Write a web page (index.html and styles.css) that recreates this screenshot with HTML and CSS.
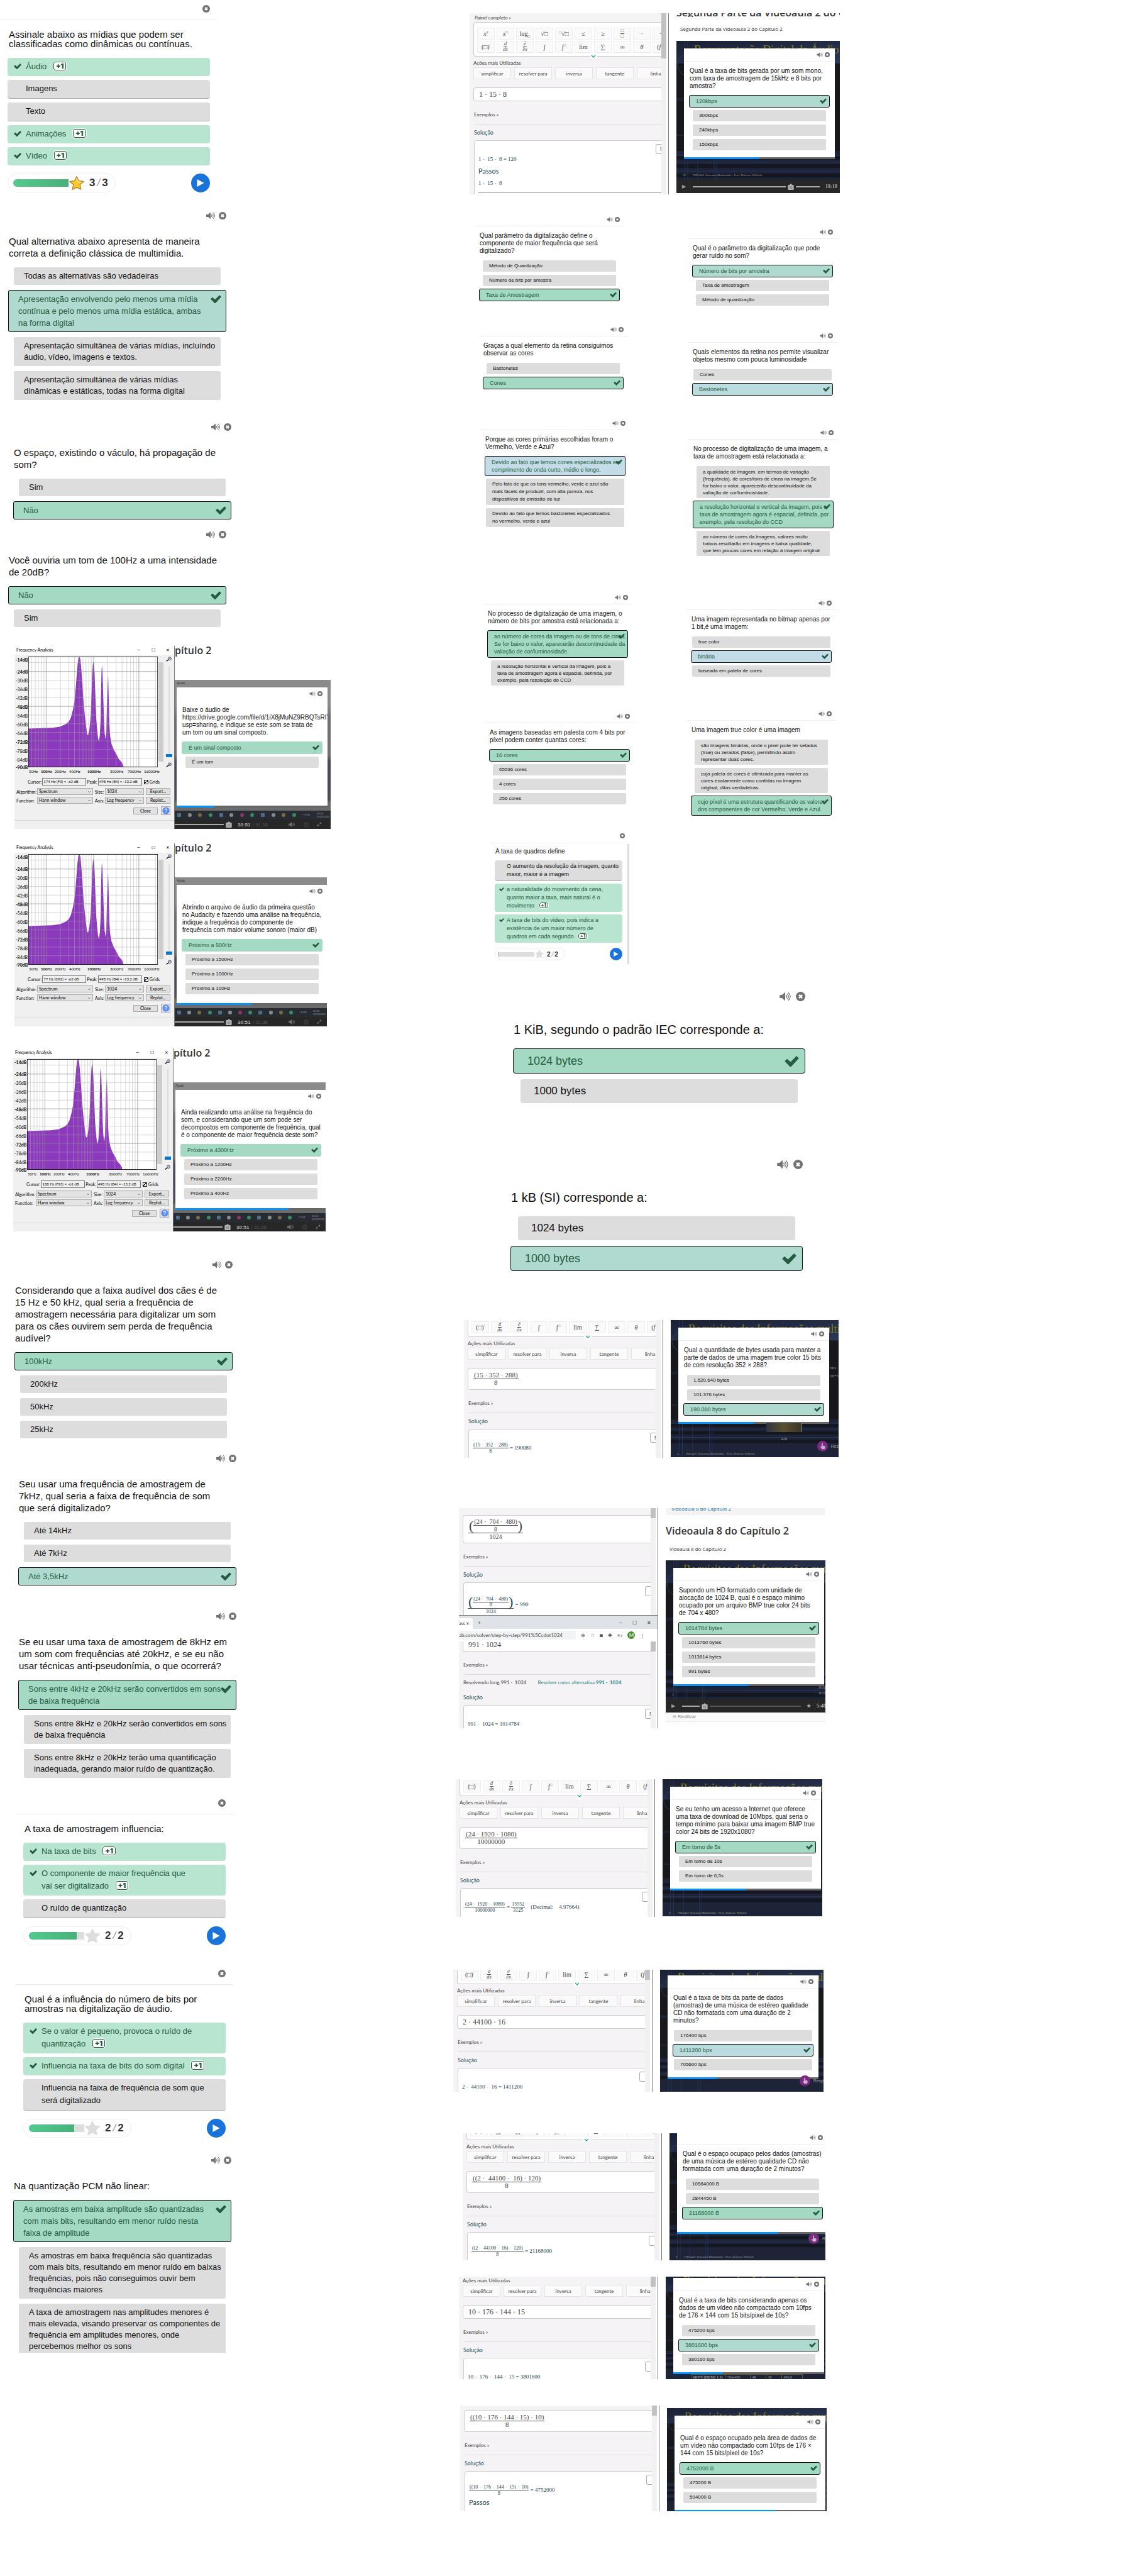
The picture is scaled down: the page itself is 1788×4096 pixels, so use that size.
FILE: index.html
```html
<!DOCTYPE html>
<html lang="pt-BR">
<head>
<meta charset="utf-8">
<title>Sistemas Multimídia - Capítulo 2</title>
<link rel="stylesheet" href="styles.css">
</head>
<body>
<svg class="defs" aria-hidden="true">
  <symbol id="close" viewBox="0 0 24 24"><circle cx="12" cy="12" r="12" fill="#727272"/><path d="M8 8l8 8M16 8l-8 8" stroke="#fff" stroke-width="4.4"/></symbol>
  <symbol id="sound" viewBox="0 0 28 24"><path d="M0 8h6l8-7v22l-8-7H0z" fill="#727272"/><path d="M16 8q4 4 0 8M19 5q7 7 0 14M22 2q10 10 0 20" fill="none" stroke="#727272" stroke-width="2"/></symbol>
  <symbol id="check" viewBox="0 0 24 18"><path d="M0 9l4-4 6 5L20 0l4 4-13 14h-2z" fill="#255c41"/></symbol>
  <symbol id="star-gold" viewBox="0 0 30 28"><path d="M15 1l4 9 10 1-7 7 2 9-9-4-9 4 2-9-7-7 10-1z" fill="#fff" stroke="#fff" stroke-width="5"/><path d="M15 2l4 8 9 1-7 6 2 9-8-4-8 4 2-9-7-6 9-1z" fill="#fdc92b" stroke="#b07a1c" stroke-width="1.4" stroke-linejoin="round"/><path d="M15 5l2 7 7 1" fill="none" stroke="#ffe98a" stroke-width="2"/></symbol>
  <symbol id="star-grey" viewBox="0 0 30 28"><path d="M15 1l4 9 10 1-7 7 2 9-9-4-9 4 2-9-7-7 10-1z" fill="#fff" stroke="#fff" stroke-width="5"/><path d="M15 2l4 8 9 1-7 6 2 9-8-4-8 4 2-9-7-6 9-1z" fill="#ddd" stroke="#ddd" stroke-width="2" stroke-linejoin="round"/></symbol>
  <symbol id="play" viewBox="0 0 30 30"><circle cx="15" cy="15" r="15" fill="#1a73d9"/><path d="M9.500 9v12l11-6z" fill="#fff"/></symbol>
  <symbol id="help" viewBox="0 0 14 14"><circle cx="7" cy="7" r="6.500" fill="#5b8def"/><path d="M5 5.500q0-2 2-2t2 1.700q0 1-1.200 1.700T7 8.300M7 9.400v1.200" fill="none" stroke="#fff" stroke-width="1.200"/></symbol>
  <symbol id="lens" viewBox="0 0 12 10"><circle cx="8" cy="4" r="3.200" fill="#dde" stroke="#222"/><path d="M5.500 6L1 9.500" stroke="#111" stroke-width="1.800"/><path d="M6.500 4h3" stroke="#12c"/></symbol>
  <symbol id="touch" viewBox="0 0 18 18"><circle cx="9" cy="9" r="9" fill="#7a2a80"/><path d="M7.500 4h1.800v4l4 1v3l-1.300 2H8L5 10l1-.600 1.500 1z" fill="#c9b3cc"/></symbol>
  <symbol id="chev" viewBox="0 0 12 12"><circle cx="6" cy="6" r="6" fill="#fff"/><path d="M3 5l3 3 3-3" fill="none" stroke="#17a89c" stroke-width="1.300"/></symbol>
  <symbol id="trash" viewBox="0 0 12 12"><path d="M1 3h10v8q0 1-1 1H2q-1 0-1-1zM4 3q0-2 2-2t2 2" fill="#b5b5b5" stroke="#b5b5b5"/><path d="M4 5v5M6 5v5M8 5v5" stroke="#777"/></symbol>
  <symbol id="spectrum" viewBox="0 0 594 407" preserveAspectRatio="none">
    <rect width="594" height="407" fill="#fff"/>
    <path d="M0 265L60 263 110 262 145 258 170 249 185 240 195 225 205 195 212 165 218 110 222 70 226 30 230 5 235 0 239 10 243 45 248 100 252 150 258 205 264 250 270 285 274 289 280 270 286 220 290 140 293 70 296 30 300 17 304 60 308 150 312 230 316 270 320 300 324 312 328 290 332 230 334 120 336 50 338 30 341 70 344 150 347 230 350 280 354 304 358 280 360 200 363 110 366 68 369 150 372 250 375 290 382 322 392 342 405 360 415 377 428 388 435 398 437 407 0 407z" fill="#8d39bd"/>
    <path d="M16 0v407M32 0v407M46 0v407M59 0v407M72 0v407M147 0v407M185 0v407M212 0v407M251 0v407M265 0v407M278 0v407M289 0v407M365 0v407M403 0v407M430 0v407M452 0v407M469 0v407M483 0v407M496 0v407M583 0v407M0 22h594M0 87h594M0 119h594M0 151h594M0 215h594M0 247h594M0 279h594M0 342h594M0 374h594" stroke="#aaa" stroke-width="1.500" opacity=".8"/>
    <path d="M82 0v407M234 0v407M300 0v407M507 0v407M0 55h594M0 183h594M0 310h594" stroke="#888" stroke-width="1.800"/>
    <rect x="1" y="1" width="592" height="405" fill="none" stroke="#000" stroke-width="2"/>
  </symbol>
  <symbol id="backdrop" viewBox="0 0 260 242" preserveAspectRatio="none">
    <rect width="260" height="242" fill="#17181c"/>
    <linearGradient id="navy" x1="0" x2="1" y1="0" y2="1"><stop offset="0" stop-color="#1a2033"/><stop offset="1" stop-color="#2b3857"/></linearGradient>
    <rect width="260" height="36" fill="url(#navy)"/>
    <rect y="175" width="260" height="67" fill="#1d2437"/>
    <path d="M0 186h260M0 199h260M0 214h260" stroke="#141620" stroke-width="6"/>
    <path d="M0 182h260M0 193h260M0 207h260" stroke="#26335a" stroke-width="1"/>
    <path d="M13 0v242M18 0v242M34 175v67M60 175v67M64 175v67M0 92h14M0 95h14M0 150h14" stroke="#26335a" stroke-width="1"/>
    <circle cx="20" cy="38" r="18" fill="none" stroke="#2c3a66"/>
  </symbol>
</svg>

<main class="board">
<div class="notes">

  <section class="quiz multi at-12">
    <header><button aria-label="Fechar"><svg class="ico"><use href="#close"/></svg></button></header>
    <h2>Assinale abaixo as mídias que podem ser<br>classificadas como dinâmicas ou contínuas.</h2>
    <div class="opts">
      <button class="opt hit"><svg class="tick"><use href="#check"/></svg>Áudio <b class="plus">+1</b></button>
      <button class="opt">Imagens</button>
      <button class="opt">Texto</button>
      <button class="opt hit"><svg class="tick"><use href="#check"/></svg>Animações <b class="plus">+1</b></button>
      <button class="opt hit"><svg class="tick"><use href="#check"/></svg>Vídeo <b class="plus">+1</b></button>
    </div>
    <footer><div class="score"><span class="track"><span style="width:100%"></span></span><svg class="star"><use href="#star-gold"/></svg><b>3<i>/</i>3</b></div><button aria-label="Continuar"><svg class="play"><use href="#play"/></svg></button></footer>
  </section>

  <section class="quiz at-13">
    <header><button aria-label="Ouvir"><svg class="snd"><use href="#sound"/></svg></button><button aria-label="Fechar"><svg class="ico"><use href="#close"/></svg></button></header>
    <h2>Qual alternativa abaixo apresenta de maneira<br>correta a definição clássica de multimídia.</h2>
    <div class="opts">
      <button class="opt">Todas as alternativas são vedadeiras</button>
      <button class="opt hit mist">Apresentação envolvendo pelo menos uma mídia<br>contínua e pelo menos uma mídia estática, ambas<br>na forma digital<svg class="tick"><use href="#check"/></svg></button>
      <button class="opt">Apresentação simultânea de várias mídias, incluíndo<br>áudio, vídeo, imagens e textos.</button>
      <button class="opt">Apresentação simultánea de várias mídias<br>dinâmicas e estáticas, todas na forma digital</button>
    </div>
  </section>

  <section class="quiz at-20">
    <header><button aria-label="Ouvir"><svg class="snd"><use href="#sound"/></svg></button><button aria-label="Fechar"><svg class="ico"><use href="#close"/></svg></button></header>
    <h2>O espaço, existindo o váculo, há propagação de<br>som?</h2>
    <div class="opts">
      <button class="opt">Sim</button>
      <button class="opt hit">Não<svg class="tick"><use href="#check"/></svg></button>
    </div>
  </section>

  <section class="quiz at-13">
    <header><button aria-label="Ouvir"><svg class="snd"><use href="#sound"/></svg></button><button aria-label="Fechar"><svg class="ico"><use href="#close"/></svg></button></header>
    <h2>Você ouviria um tom de 100Hz a uma intensidade<br>de 20dB?</h2>
    <div class="opts">
      <button class="opt hit">Não<svg class="tick"><use href="#check"/></svg></button>
      <button class="opt">Sim</button>
    </div>
  </section>

  <section class="lesson at-23">
    <div class="audacity">
      <div class="titlebar"><span>Frequency Analysis</span><span class="wbtn">—</span><span class="wbtn">☐</span><span class="wbtn">✕</span></div>
      <div class="plotrow">
        <ul class="db"><li><b>-14dB</b></li><li><b>-24dB</b></li><li>-30dB</li><li>-36dB</li><li>-42dB</li><li><b>-48dB</b></li><li>-54dB</li><li>-60dB</li><li>-66dB</li><li><b>-72dB</b></li><li>-78dB</li><li>-84dB</li><li><b>-90dB</b></li></ul>
        <svg class="plot"><use href="#spectrum"/></svg>
        <div class="vscroll"></div>
        <div class="zoomer"><svg><use href="#lens"/></svg><span></span><svg><use href="#lens"/></svg></div>
      </div>
      <div class="hz"><span>50Hz</span><b>100Hz</b><span>200Hz</span><span>400Hz</span><b>1000Hz</b><span>3000Hz</span><span>7000Hz</span><span>16000Hz</span></div>
      <div class="readout"><label for="c1">Cursor:</label><input id="c1" value="174 Hz (F3) = -62 dB"><label for="p1">Peak:</label><input id="p1" value="498 Hz (B4) = -13.2 dB"><input type="checkbox" id="g1" checked><label for="g1">Grids</label></div>
      <div class="settings">
        <label for="a1">Algorithm:</label><select id="a1"><option>Spectrum</option></select><label for="s1">Size:</label><select id="s1"><option>1024</option></select><button>Export...</button>
        <label for="f1">Function:</label><select id="f1"><option>Hann window</option></select><label for="x1">Axis:</label><select id="x1"><option>Log frequency</option></select><button>Replot...</button>
      </div>
      <div class="closing"><button>Close</button><button class="help" aria-label="Help"><svg><use href="#help"/></svg></button></div>
    </div>
    <div class="screen w-248">
      <h1>pítulo 2</h1>
      <div class="desktop">
        <small>Ajuda</small>
        <div class="modal tall">
          <section class="quiz small flat">
            <header><button aria-label="Ouvir"><svg class="snd"><use href="#sound"/></svg></button><button aria-label="Fechar"><svg class="ico"><use href="#close"/></svg></button></header>
            <h2>Baixe o áudio de<br>https://drive.google.com/file/d/1iX8jMuNZ9RBQTsRIYjy<br>usp=sharing, e indique se este som se trata de<br>um tom ou um sinal composto.</h2>
            <div class="opts"><button class="opt hit">É um sinal composto<svg class="tick"><use href="#check"/></svg></button><button class="opt">É um tom</button></div>
          </section>
          <div class="bar"><span style="width:25%"></span></div>
        </div>
        <div class="taskbar"><i></i><i></i><i></i><i></i><i></i><i></i><i></i><i></i><i></i><i></i><i></i><i></i><span>^ POR</span><span>09:04<br>01/09/2020</span></div>
        <div class="controls"><span class="seek"></span><svg><use href="#trash"/></svg><b>30:51</b><span class="dim">/ 31:36</span><svg class="late"><use href="#sound"/></svg><span class="gear">⚙</span><span>⤢</span></div>
      </div>
    </div>
  </section>

  <section class="lesson at-23">
    <div class="audacity">
      <div class="titlebar"><span>Frequency Analysis</span><span class="wbtn">—</span><span class="wbtn">☐</span><span class="wbtn">✕</span></div>
      <div class="plotrow">
        <ul class="db"><li><b>-14dB</b></li><li><b>-24dB</b></li><li>-30dB</li><li>-36dB</li><li>-42dB</li><li><b>-48dB</b></li><li>-54dB</li><li>-60dB</li><li>-66dB</li><li><b>-72dB</b></li><li>-78dB</li><li>-84dB</li><li><b>-90dB</b></li></ul>
        <svg class="plot"><use href="#spectrum"/></svg>
        <div class="vscroll"></div>
        <div class="zoomer"><svg><use href="#lens"/></svg><span></span><svg><use href="#lens"/></svg></div>
      </div>
      <div class="hz"><span>50Hz</span><b>100Hz</b><span>200Hz</span><span>400Hz</span><b>1000Hz</b><span>3000Hz</span><span>7000Hz</span><span>16000Hz</span></div>
      <div class="readout"><label for="c2">Cursor:</label><input id="c2" value="77 Hz (D♯2) = -62 dB"><label for="p2">Peak:</label><input id="p2" value="498 Hz (B4) = -13.2 dB"><input type="checkbox" id="g2" checked><label for="g2">Grids</label></div>
      <div class="settings">
        <label for="a2">Algorithm:</label><select id="a2"><option>Spectrum</option></select><label for="s2">Size:</label><select id="s2"><option>1024</option></select><button>Export...</button>
        <label for="f2">Function:</label><select id="f2"><option>Hann window</option></select><label for="x2">Axis:</label><select id="x2"><option>Log frequency</option></select><button>Replot...</button>
      </div>
      <div class="closing"><button>Close</button><button class="help" aria-label="Help"><svg><use href="#help"/></svg></button></div>
    </div>
    <div class="screen w-242">
      <h1>pítulo 2</h1>
      <div class="desktop">
        <small>Ajuda</small>
        <div class="modal tall">
          <section class="quiz small flat">
            <header><button aria-label="Ouvir"><svg class="snd"><use href="#sound"/></svg></button><button aria-label="Fechar"><svg class="ico"><use href="#close"/></svg></button></header>
            <h2>Abrindo o arquivo de áudio da primeira questão<br>no Audacity e fazendo uma análise na frequência,<br>indique a frequência do componente de<br>frequência com maior volume sonoro (maior dB)</h2>
            <div class="opts"><button class="opt hit">Próximo a 500Hz<svg class="tick"><use href="#check"/></svg></button><button class="opt">Próximo a 1500Hz</button><button class="opt">Próximo a 1000Hz</button><button class="opt">Próximo a 100Hz</button></div>
          </section>
          <div class="bar"><span style="width:50%"></span></div>
        </div>
        <div class="taskbar"><i></i><i></i><i></i><i></i><i></i><i></i><i></i><i></i><i></i><i></i><i></i><i></i><span>^ POR</span><span>09:04<br>01/09/2020</span></div>
        <div class="controls"><span class="seek"></span><svg><use href="#trash"/></svg><b>30:51</b><span class="dim">/ 31:36</span><svg class="late"><use href="#sound"/></svg><span class="gear">⚙</span><span>⤢</span></div>
      </div>
    </div>
  </section>

  <section class="lesson at-20">
    <div class="audacity">
      <div class="titlebar"><span>Frequency Analysis</span><span class="wbtn">—</span><span class="wbtn">☐</span><span class="wbtn">✕</span></div>
      <div class="plotrow">
        <ul class="db"><li><b>-14dB</b></li><li><b>-24dB</b></li><li>-30dB</li><li>-36dB</li><li>-42dB</li><li><b>-48dB</b></li><li>-54dB</li><li>-60dB</li><li>-66dB</li><li><b>-72dB</b></li><li>-78dB</li><li>-84dB</li><li><b>-90dB</b></li></ul>
        <svg class="plot"><use href="#spectrum"/></svg>
        <div class="vscroll"></div>
        <div class="zoomer"><svg><use href="#lens"/></svg><span></span><svg><use href="#lens"/></svg></div>
      </div>
      <div class="hz"><span>50Hz</span><b>100Hz</b><span>200Hz</span><span>400Hz</span><b>1000Hz</b><span>3000Hz</span><span>7000Hz</span><span>16000Hz</span></div>
      <div class="readout"><label for="c3">Cursor:</label><input id="c3" value="188 Hz (F♯3) = -61 dB"><label for="p3">Peak:</label><input id="p3" value="498 Hz (B4) = -13.2 dB"><input type="checkbox" id="g3" checked><label for="g3">Grids</label></div>
      <div class="settings">
        <label for="a3">Algorithm:</label><select id="a3"><option>Spectrum</option></select><label for="s3">Size:</label><select id="s3"><option>1024</option></select><button>Export...</button>
        <label for="f3">Function:</label><select id="f3"><option>Hann window</option></select><label for="x3">Axis:</label><select id="x3"><option>Log frequency</option></select><button>Replot...</button>
      </div>
      <div class="closing"><button>Close</button><button class="help" aria-label="Help"><svg><use href="#help"/></svg></button></div>
    </div>
    <div class="screen w-242">
      <h1>pítulo 2</h1>
      <div class="desktop">
        <small>Ajuda</small>
        <div class="modal tall">
          <section class="quiz small flat">
            <header><button aria-label="Ouvir"><svg class="snd"><use href="#sound"/></svg></button><button aria-label="Fechar"><svg class="ico"><use href="#close"/></svg></button></header>
            <h2>Ainda realizando uma análise na frequência do<br>som, e considerando que um som pode ser<br>decompostos em componente de frequência, qual<br>é o componente de maior frequência deste som?</h2>
            <div class="opts"><button class="opt hit">Próximo a 4300Hz<svg class="tick"><use href="#check"/></svg></button><button class="opt">Próximo a 1200Hz</button><button class="opt">Próximo a 2200Hz</button><button class="opt">Próximo a 400Hz</button></div>
          </section>
          <div class="bar"><span style="width:75%"></span></div>
        </div>
        <div class="taskbar"><i></i><i></i><i></i><i></i><i></i><i></i><i></i><i></i><i></i><i></i><i></i><i></i><span>^ POR</span><span>09:04<br>01/09/2020</span></div>
        <div class="controls"><span class="seek"></span><svg><use href="#trash"/></svg><b>30:51</b><span class="dim">/ 31:36</span><svg class="late"><use href="#sound"/></svg><span class="gear">⚙</span><span>⤢</span></div>
      </div>
    </div>
  </section>

  <section class="quiz at-23">
    <header><button aria-label="Ouvir"><svg class="snd"><use href="#sound"/></svg></button><button aria-label="Fechar"><svg class="ico"><use href="#close"/></svg></button></header>
    <h2>Considerando que a faixa audível dos cães é de<br>15 Hz e 50 kHz, qual seria a frequência de<br>amostragem necessária para digitalizar um som<br>para os cães ouvirem sem perda de frequência<br>audível?</h2>
    <div class="opts">
      <button class="opt hit">100kHz<svg class="tick"><use href="#check"/></svg></button>
      <button class="opt">200kHz</button>
      <button class="opt">50kHz</button>
      <button class="opt">25kHz</button>
    </div>
  </section>

  <section class="quiz at-29">
    <header><button aria-label="Ouvir"><svg class="snd"><use href="#sound"/></svg></button><button aria-label="Fechar"><svg class="ico"><use href="#close"/></svg></button></header>
    <h2>Seu usar uma frequência de amostragem de<br>7kHz, qual seria a faixa de frequência de som<br>que será digitalizado?</h2>
    <div class="opts">
      <button class="opt">Até 14kHz</button>
      <button class="opt">Até 7kHz</button>
      <button class="opt hit mist">Até 3,5kHz<svg class="tick"><use href="#check"/></svg></button>
    </div>
  </section>

  <section class="quiz at-29">
    <header><button aria-label="Ouvir"><svg class="snd"><use href="#sound"/></svg></button><button aria-label="Fechar"><svg class="ico"><use href="#close"/></svg></button></header>
    <h2>Se eu usar uma taxa de amostragem de 8kHz em<br>um som com frequências até 20kHz, e se eu não<br>usar técnicas anti-pseudonímia, o que ocorrerá?</h2>
    <div class="opts">
      <button class="opt hit">Sons entre 4kHz e 20kHz serão convertidos em sons<br>de baixa frequência<svg class="tick"><use href="#check"/></svg></button>
      <button class="opt">Sons entre 8kHz e 20kHz serão convertidos em sons<br>de baixa frequência</button>
      <button class="opt">Sons entre 8kHz e 20kHz terão uma quantificação<br>inadequada, gerando maior ruído de quantização.</button>
    </div>
  </section>

  <section class="quiz multi at-37">
    <header><button aria-label="Fechar"><svg class="ico"><use href="#close"/></svg></button></header>
    <h2>A taxa de amostragem influencia:</h2>
    <div class="opts">
      <button class="opt hit"><svg class="tick"><use href="#check"/></svg>Na taxa de bits <b class="plus">+1</b></button>
      <button class="opt hit"><svg class="tick"><use href="#check"/></svg>O componente de maior frequência que<br>vai ser digitalizado <b class="plus">+1</b></button>
      <button class="opt">O ruído de quantização</button>
    </div>
    <footer><div class="score"><span class="track"><span style="width:86%"></span></span><svg class="star"><use href="#star-grey"/></svg><b>2<i>/</i>2</b></div><button aria-label="Continuar"><svg class="play"><use href="#play"/></svg></button></footer>
  </section>

  <section class="quiz multi at-37">
    <header><button aria-label="Fechar"><svg class="ico"><use href="#close"/></svg></button></header>
    <h2>Qual é a influência do número de bits por<br>amostras na digitalização de áudio.</h2>
    <div class="opts">
      <button class="opt hit"><svg class="tick"><use href="#check"/></svg>Se o valor é pequeno, provoca o ruído de<br>quantização <b class="plus">+1</b></button>
      <button class="opt hit"><svg class="tick"><use href="#check"/></svg>Influencia na taxa de bits do som digital <b class="plus">+1</b></button>
      <button class="opt">Influencia na faixa de frequência de som que<br>será digitalizado</button>
    </div>
    <footer><div class="score"><span class="track"><span style="width:82%"></span></span><svg class="star"><use href="#star-grey"/></svg><b>2<i>/</i>2</b></div><button aria-label="Continuar"><svg class="play"><use href="#play"/></svg></button></footer>
  </section>

  <section class="quiz at-20">
    <header><button aria-label="Ouvir"><svg class="snd"><use href="#sound"/></svg></button><button aria-label="Fechar"><svg class="ico"><use href="#close"/></svg></button></header>
    <h2>Na quantização PCM não linear:</h2>
    <div class="opts">
      <button class="opt hit">As amostras em baixa amplitude são quantizadas<br>com mais bits, resultando em menor ruído nesta<br>faixa de amplitude<svg class="tick"><use href="#check"/></svg></button>
      <button class="opt">As amostras em baixa frequência são quantizadas<br>com mais bits, resultando em menor ruído em baixas<br>frequências, pois não conseguimos ouvir bem<br>frequências maiores</button>
      <button class="opt cropped">A taxa de amostragem nas amplitudes menores é<br>mais elevada, visando preservar os componentes de<br>frequência em amplitudes menores, onde<br>percebemos melhor os sons</button>
    </div>
  </section>
</div>

<div class="clips">

  <section class="pair in-27">
    <div class="panel h-288">
      <div class="sheet">
        <p class="full">Painel completo »</p>
        <div class="keypad whole">
          <div class="keys"><button><i>x</i><sup>2</sup></button><button><i>x</i><sup>□</sup></button><button class="word">log<sub>□</sub></button><button>√□</button><button><sup>□</sup>√□</button><button>≤</button><button>≥</button><button><span class="frac"><span>□</span><span>□</span></span></button><button>·</button><button>÷</button></div>
          <div class="keys"><button>(□)<sup>′</sup></button><button><span class="frac"><i>d</i><i>dx</i></span></button><button><span class="frac"><i>∂</i><i>∂x</i></span></button><button>∫</button><button>∫<sup>□</sup></button><button>lim</button><button>∑</button><button>∞</button><button><i>θ</i></button><button>(<i>f</i> ∘</button></div>
          <svg class="chev"><use href="#chev"/></svg>
        </div>
        <p class="acts-title">Ações mais Utilizadas</p>
        <div class="acts"><button>simplificar</button><button>resolver para</button><button>inversa</button><button>tangente</button><button>linha</button></div>
        <div class="entry">1 · 15 · 8</div>
        <p class="examples">Exemplos »</p>
        <p class="solution">Solução</p>
        <div class="result"><button class="more">M</button><p>1 · &nbsp;15 · &nbsp;8 = 120</p><h3>Passos</h3><p>1 · &nbsp;15 · &nbsp;8</p><hr></div>
      </div>
      <div class="gutter thumb-long"></div>
    </div>
    <div class="screen w-260">
      <h1 class="halved">Segunda Parte da Videoaula 2 do Capítulo 2</h1>
      <p class="lead">Segunda Parte da Videoaula 2 do Capítulo 2</p>
      <div class="slide">
        <svg class="back"><use href="#backdrop"/></svg>
        <p class="slide-title">Representação Digital de Áudio</p>
        <div class="modal">
          <section class="quiz small">
            <header><button aria-label="Ouvir"><svg class="snd"><use href="#sound"/></svg></button><button aria-label="Fechar"><svg class="ico"><use href="#close"/></svg></button></header>
            <h2>Qual é a taxa de bits gerada por um som mono,<br>com taxa de amostragem de 15kHz e 8 bits por<br>amostra?</h2>
            <div class="opts"><button class="opt hit mist">120kbps<svg class="tick"><use href="#check"/></svg></button><button class="opt">300kbps</button><button class="opt">240kbps</button><button class="opt">150kbps</button></div>
          </section>
          <div class="bar"><span style="width:50%"></span></div>
        </div>
        <p class="slide-foot"><span>23</span> INE5431 Sistemas Multimídia - Prof. Roberto Willrich</p>
        <div class="controls deck"><span>▶</span><span class="seek"></span><svg><use href="#trash"/></svg><span class="seek"></span><b>19:18</b></div>
      </div>
    </div>
  </section>

  <div class="duo duo-params">
    <section class="quiz small">
      <header><button aria-label="Ouvir"><svg class="snd"><use href="#sound"/></svg></button><button aria-label="Fechar"><svg class="ico"><use href="#close"/></svg></button></header>
      <h2>Qual parâmetro da digitalização define o<br>componente de maior frequência que será<br>digitalizado?</h2>
      <div class="opts"><button class="opt">Método de Quantização</button><button class="opt">Número de bits por amostra</button><button class="opt hit">Taxa de Amostragem<svg class="tick"><use href="#check"/></svg></button></div>
    </section>
    <section class="quiz small">
      <header><button aria-label="Ouvir"><svg class="snd"><use href="#sound"/></svg></button><button aria-label="Fechar"><svg class="ico"><use href="#close"/></svg></button></header>
      <h2>Qual é o parâmetro da digitalização que pode<br>gerar ruído no som?</h2>
      <div class="opts"><button class="opt hit mist">Número de bits por amostra<svg class="tick"><use href="#check"/></svg></button><button class="opt">Taxa de amostragem</button><button class="opt">Método de quantização</button></div>
    </section>
  </div>

  <div class="duo duo-retina">
    <section class="quiz small">
      <header><button aria-label="Ouvir"><svg class="snd"><use href="#sound"/></svg></button><button aria-label="Fechar"><svg class="ico"><use href="#close"/></svg></button></header>
      <h2>Graças a qual elemento da retina consiguimos<br>observar as cores</h2>
      <div class="opts"><button class="opt">Bastonetes</button><button class="opt hit">Cones<svg class="tick"><use href="#check"/></svg></button></div>
    </section>
    <section class="quiz small">
      <header><button aria-label="Ouvir"><svg class="snd"><use href="#sound"/></svg></button><button aria-label="Fechar"><svg class="ico"><use href="#close"/></svg></button></header>
      <h2>Quais elementos da retina nos permite visualizar<br>objetos mesmo com pouca luminosidade</h2>
      <div class="opts wide"><button class="opt">Cones</button><button class="opt hit sky">Bastonetes<svg class="tick"><use href="#check"/></svg></button></div>
    </section>
  </div>

  <div class="duo duo-colors">
    <section class="quiz small">
      <header><button aria-label="Ouvir"><svg class="snd"><use href="#sound"/></svg></button><button aria-label="Fechar"><svg class="ico"><use href="#close"/></svg></button></header>
      <h2>Porque as cores primárias escolhidas foram o<br>Vermelho, Verde e Azui?</h2>
      <div class="opts wide"><button class="opt hit blue">Devido ao fato que temos cones especializados em<br>comprimento de onda curto, médio e longo.<svg class="tick"><use href="#check"/></svg></button><button class="opt">Pelo fato de que os tons vermelho, verde e azul são<br>mais fáceis de produzir, com alta pureza, nos<br>dispositivos de emissão de luz</button><button class="opt">Devido ao fato que temos bastonetes especializados<br>no vermelho, verde e azul</button></div>
    </section>
    <section class="quiz small">
      <header><button aria-label="Ouvir"><svg class="snd"><use href="#sound"/></svg></button><button aria-label="Fechar"><svg class="ico"><use href="#close"/></svg></button></header>
      <h2>No processo de digitalização de uma imagem, a<br>taxa de amostragem está relacionada a:</h2>
      <div class="opts tight"><button class="opt">a qualidade de imagem, em termos de variação<br>(frequência), de cores/tons de cinza na imagem.Se<br>for baixo o valor, aparecerão descontinuidade da<br>valiação de cor/luminosidade.</button><button class="opt hit">a resolução horizontal e vertical da imagem, pois a<br>taxa de amostragem agora é espacial, definida, por<br>exemplo, pela resolução do CCD<svg class="tick"><use href="#check"/></svg></button><button class="opt">ao número de cores da imagens, valores muito<br>baixos resultarão em imagens e baixa qualidade,<br>que tem poucas cores em relação à imagem original</button></div>
    </section>
  </div>

  <div class="duo duo-bits">
    <section class="quiz small">
      <header><button aria-label="Ouvir"><svg class="snd"><use href="#sound"/></svg></button><button aria-label="Fechar"><svg class="ico"><use href="#close"/></svg></button></header>
      <h2>No processo de digitalização de uma imagem, o<br>número de bits por amostra está relacionada a:</h2>
      <div class="opts tight"><button class="opt hit">ao número de cores da imagem ou de tons de cinza.<br>Se for baixo o valor, aparecerão descontinuidade da<br>valiação de cor/luminosidade.<svg class="tick"><use href="#check"/></svg></button><button class="opt">a resolução horizontal e vertical da imagem, pois a<br>taxa de amostragem agora é espacial, definida, por<br>exemplo, pela resolução do CCD</button></div>
    </section>
    <section class="quiz small">
      <header><button aria-label="Ouvir"><svg class="snd"><use href="#sound"/></svg></button><button aria-label="Fechar"><svg class="ico"><use href="#close"/></svg></button></header>
      <h2>Uma imagem representada no bitmap apenas por<br>1 bit,é uma imagem:</h2>
      <div class="opts wide"><button class="opt">true color</button><button class="opt hit blue">binária<svg class="tick"><use href="#check"/></svg></button><button class="opt">baseada em paleta de cores</button></div>
    </section>
  </div>

  <div class="duo duo-palette">
    <section class="quiz small">
      <header><button aria-label="Ouvir"><svg class="snd"><use href="#sound"/></svg></button><button aria-label="Fechar"><svg class="ico"><use href="#close"/></svg></button></header>
      <h2>As imagens baseadas em palesta com 4 bits por<br>píxel podem conter quantas cores:</h2>
      <div class="opts"><button class="opt hit">16 cores<svg class="tick"><use href="#check"/></svg></button><button class="opt">65536 cores</button><button class="opt">4 cores</button><button class="opt">256 cores</button></div>
    </section>
    <section class="quiz small">
      <header><button aria-label="Ouvir"><svg class="snd"><use href="#sound"/></svg></button><button aria-label="Fechar"><svg class="ico"><use href="#close"/></svg></button></header>
      <h2>Uma imagem true color é uma imagem</h2>
      <div class="opts tight"><button class="opt">são imagens binárias, onde o pixel pode ter setados<br>(true) ou zerados (false), permitindo assim<br>representar duas cores.</button><button class="opt">cuja paleta de cores é otimizada para manter as<br>cores exatamente como contidas na imagem<br>original, ditas verdadeiras.</button><button class="opt hit">cujo píxel é uma estrutura quantificando os valores<br>dos componentes de cor Vermelho, Verde e Azul.<svg class="tick"><use href="#check"/></svg></button></div>
    </section>
  </div>

  <div class="framed">
    <section class="quiz multi mini">
      <header><button aria-label="Fechar"><svg class="ico"><use href="#close"/></svg></button></header>
      <h2>A taxa de quadros define</h2>
      <div class="opts">
        <button class="opt">O aumento da resolução da imagem, quanto<br>maior, maior é a imagem</button>
        <button class="opt hit"><svg class="tick"><use href="#check"/></svg>a naturalidade do movimento da cena,<br>quanto maior a taxa, mais natural é o<br>movimento <b class="plus">+1</b></button>
        <button class="opt hit"><svg class="tick"><use href="#check"/></svg>A taxa de bits do vídeo, pois indica a<br>existência de um maior número de<br>quadros em cada segundo <b class="plus">+1</b></button>
      </div>
      <footer><div class="score"><span class="track"><span style="width:2%"></span></span><svg class="star"><use href="#star-grey"/></svg><b>2<i>/</i>2</b></div><button aria-label="Continuar"><svg class="play"><use href="#play"/></svg></button></footer>
    </section>
  </div>

  <section class="quiz large in-96">
    <header><button aria-label="Ouvir"><svg class="snd"><use href="#sound"/></svg></button><button aria-label="Fechar"><svg class="ico"><use href="#close"/></svg></button></header>
    <h2>1 KiB, segundo o padrão IEC corresponde a:</h2>
    <div class="opts"><button class="opt hit">1024 bytes<svg class="tick"><use href="#check"/></svg></button><button class="opt">1000 bytes</button></div>
  </section>

  <section class="quiz large in-92">
    <header><button aria-label="Ouvir"><svg class="snd"><use href="#sound"/></svg></button><button aria-label="Fechar"><svg class="ico"><use href="#close"/></svg></button></header>
    <h2>1 kB (SI) corresponde a:</h2>
    <div class="opts"><button class="opt">1024 bytes</button><button class="opt hit mist">1000 bytes<svg class="tick"><use href="#check"/></svg></button></div>
  </section>

  <section class="pair in-18">
    <div class="panel h-219">
      <div class="sheet">
        <div class="keypad">
          <div class="keys"><button>(□)<sup>′</sup></button><button><span class="frac"><i>d</i><i>dx</i></span></button><button><span class="frac"><i>∂</i><i>∂x</i></span></button><button>∫</button><button>∫<sup>□</sup></button><button>lim</button><button>∑</button><button>∞</button><button><i>θ</i></button><button>(<i>f</i> ∘</button></div>
          <svg class="chev"><use href="#chev"/></svg>
        </div>
        <p class="acts-title">Ações mais Utilizadas</p>
        <div class="acts"><button>simplificar</button><button>resolver para</button><button>inversa</button><button>tangente</button><button>linha</button></div>
        <div class="entry two"><span class="frac"><span>(15 · 352 · 288)</span><span>8</span></span></div>
        <p class="examples">Exemplos »</p>
        <p class="solution">Solução</p>
        <div class="result"><button class="more">M</button><p><span class="frac"><span>(15 · &nbsp;352 · &nbsp;288)</span><span>8</span></span> = 190080</p></div>
      </div>
      <div class="gutter"></div>
    </div>
    <div class="screen w-267">
      <div class="slide h-218">
        <svg class="back"><use href="#backdrop"/></svg>
        <p class="slide-title">Requisitos das Informações multimídia</p>
        <div class="modal">
          <section class="quiz small">
            <header><button aria-label="Ouvir"><svg class="snd"><use href="#sound"/></svg></button><button aria-label="Fechar"><svg class="ico"><use href="#close"/></svg></button></header>
            <h2>Qual a quantidade de bytes usada para manter a<br>parte de dados de uma imagem true color 15 bits<br>de com resolução 352 × 288?</h2>
            <div class="opts"><button class="opt">1.520.640 bytes</button><button class="opt">101.376 bytes</button><button class="opt hit mist">190.080 bytes<svg class="tick"><use href="#check"/></svg></button></div>
          </section>
          <div class="bar"><span style="width:50%"></span></div>
        </div>
        <div class="figure"><span></span>420</div>
        <p class="side">bits<br>20*5</p>
        <p class="answer"><svg><use href="#touch"/></svg>Res</p>
        <p class="slide-foot"><span>4</span> INE5431 Sistemas Multimídia - Prof. Roberto Willrich</p>
      </div>
    </div>
  </section>

  <section class="pair in-10">
    <div class="panel stack h-350">
      <div class="split upper">
        <div class="sheet">
          <div class="entry three"><span class="frac"><span class="paren"><span class="frac"><span>(24 · &nbsp;704 · &nbsp;480)</span><span>8</span></span></span><span>1024</span></span></div>
          <p class="examples">Exemplos »</p>
          <p class="solution">Solução</p>
          <div class="result"><button class="more"></button><p><span class="frac"><span class="paren"><span class="frac"><span>(24 · &nbsp;704 · &nbsp;480)</span><span>8</span></span></span><span>1024</span></span> = 990</p></div>
        </div>
        <div class="gutter thumb"></div>
      </div>
      <div class="tabs"><span class="tab">ass ✕</span><span>+</span><span class="win">—</span><span>☐</span><span>✕</span></div>
      <div class="address"><input aria-label="Endereço" value="ab.com/solver/step-by-step/991%5Ccdot1024"><span>⊕</span><span>☆</span><span>◙</span><span>✚</span><span>≡♪</span><b>M</b><span>⋮</span></div>
      <div class="split">
        <div class="sheet">
          <div class="entry lower">991 · 1024</div>
          <p class="examples">Exemplos »</p>
          <p class="methods"><span>Resolvendo long 991 · &nbsp;1024</span><a href="#alt">Resolver como alternativa <b>991 · &nbsp;1024</b></a></p>
          <p class="solution">Solução</p>
          <div class="result"><button class="more">M</button><p>991 · &nbsp;1024 = 1014784</p></div>
        </div>
        <div class="gutter thumb"></div>
      </div>
    </div>
    <div class="screen w-254">
      <p class="crumb"><a href="#aula8">Videoaula 8 do Capítulo 2</a></p>
      <h1 class="title">Videoaula 8 do Capítulo 2</h1>
      <p class="lead">Videaula 8 do Capítulo 2</p>
      <div class="slide">
        <svg class="back"><use href="#backdrop"/></svg>
        <p class="slide-title">Requisitos das Informações multimídia</p>
        <div class="modal">
          <section class="quiz small">
            <header><button aria-label="Ouvir"><svg class="snd"><use href="#sound"/></svg></button><button aria-label="Fechar"><svg class="ico"><use href="#close"/></svg></button></header>
            <h2>Supondo um HD formatado com unidade de<br>alocação de 1024 B, qual é o espaço mínimo<br>ocupado por um arquivo BMP true color 24 bits<br>de 704 x 480?</h2>
            <div class="opts"><button class="opt hit">1014784 bytes<svg class="tick"><use href="#check"/></svg></button><button class="opt">1013760 bytes</button><button class="opt">1013814 bytes</button><button class="opt">991 bytes</button></div>
          </section>
          <div class="bar"><span style="width:50%"></span></div>
        </div>
        <p class="side low">010<br>010</p>
        <p class="slide-foot"><span>5</span></p>
        <div class="controls deck"><span>▶</span><span class="seek short"></span><svg><use href="#trash"/></svg><span class="seek dark"></span><b>★</b><b>5:40</b></div>
      </div>
      <p class="reuse">⟳ Reutilizar</p>
    </div>
  </section>

  <section class="pair in-5">
    <div class="panel h-219">
      <div class="sheet">
        <div class="keypad">
          <div class="keys"><button>(□)<sup>′</sup></button><button><span class="frac"><i>d</i><i>dx</i></span></button><button><span class="frac"><i>∂</i><i>∂x</i></span></button><button>∫</button><button>∫<sup>□</sup></button><button>lim</button><button>∑</button><button>∞</button><button><i>θ</i></button><button>(<i>f</i> ∘</button></div>
          <svg class="chev"><use href="#chev"/></svg>
        </div>
        <p class="acts-title">Ações mais Utilizadas</p>
        <div class="acts"><button>simplificar</button><button>resolver para</button><button>inversa</button><button>tangente</button><button>linha</button></div>
        <div class="entry two"><span class="frac"><span>(24 · 1920 · 1080)</span><span>10000000</span></span></div>
        <p class="examples">Exemplos »</p>
        <p class="solution">Solução</p>
        <div class="result"><button class="more"></button><p><span class="frac"><span>(24 · &nbsp;1920 · &nbsp;1080)</span><span>10000000</span></span> = <span class="frac"><span>15552</span><span>3125</span></span> &nbsp; &nbsp;(Decimal: &nbsp; &nbsp;4.97664)</p></div>
      </div>
      <div class="gutter"></div>
    </div>
    <div class="screen w-254">
      <div class="slide h-218">
        <svg class="back"><use href="#backdrop"/></svg>
        <p class="slide-title">Requisitos das Informações multimídia</p>
        <div class="modal">
          <section class="quiz small">
            <header><button aria-label="Ouvir"><svg class="snd"><use href="#sound"/></svg></button><button aria-label="Fechar"><svg class="ico"><use href="#close"/></svg></button></header>
            <h2>Se eu tenho um acesso a Internet que oferece<br>uma taxa de download de 10Mbps, qual seria o<br>tempo mínimo para baixar uma imagem BMP true<br>color 24 bits de 1920x1080?</h2>
            <div class="opts"><button class="opt hit">Em torno de 5s<svg class="tick"><use href="#check"/></svg></button><button class="opt">Em torno de 10s</button><button class="opt">Em torno de 0,5s</button></div>
          </section>
          <div class="bar"><span style="width:50%"></span></div>
        </div>
        <p class="slide-foot"><span>6</span> INE5431 Sistemas Multimídia - Prof. Roberto Willrich</p>
      </div>
    </div>
  </section>

  <section class="pair in-1">
    <div class="panel h-194">
      <div class="sheet">
        <div class="keypad short">
          <div class="keys"><button>(□)<sup>′</sup></button><button><span class="frac"><i>d</i><i>dx</i></span></button><button><span class="frac"><i>∂</i><i>∂x</i></span></button><button>∫</button><button>∫<sup>□</sup></button><button>lim</button><button>∑</button><button>∞</button><button><i>θ</i></button><button>(<i>f</i> ∘</button></div>
          <svg class="chev"><use href="#chev"/></svg>
        </div>
        <p class="acts-title">Ações mais Utilizadas</p>
        <div class="acts"><button>simplificar</button><button>resolver para</button><button>inversa</button><button>tangente</button><button>linha</button></div>
        <div class="entry">2 · 44100 · 16</div>
        <p class="examples">Exemplos »</p>
        <p class="solution">Solução</p>
        <div class="result"><button class="more"></button><p>2 · &nbsp;44100 · &nbsp;16 = 1411200</p></div>
      </div>
      <div class="gutter thumb"></div>
    </div>
    <div class="screen w-260">
      <div class="slide h-194 raised">
        <svg class="back"><use href="#backdrop"/></svg>
        <p class="slide-title">Requisitos das Informações multimídia</p>
        <div class="modal">
          <section class="quiz small">
            <header><button aria-label="Ouvir"><svg class="snd"><use href="#sound"/></svg></button><button aria-label="Fechar"><svg class="ico"><use href="#close"/></svg></button></header>
            <h2>Qual é a taxa de bits da parte de dados<br>(amostras) de uma música de estéreo qualidade<br>CD não formatada com uma duração de 2<br>minutos?</h2>
            <div class="opts wide"><button class="opt">176400 bps</button><button class="opt hit sky">1411200 bps<svg class="tick"><use href="#check"/></svg></button><button class="opt">705600 bps</button></div>
          </section>
          <div class="bar"><span style="width:33%"></span></div>
        </div>
        <p class="answer"><svg><use href="#touch"/></svg>Resp</p>
      </div>
    </div>
  </section>

  <section class="pair in-16">
    <div class="panel h-202">
      <div class="sheet">
        <div class="keypad sliver">
          <div class="keys"><button>(□)<sup>′</sup></button><button><span class="frac"><i>d</i><i>dx</i></span></button><button><span class="frac"><i>∂</i><i>∂x</i></span></button><button>∫</button><button>∫<sub>□</sub></button><button></button><button>∑</button><button></button><button></button><button>(<i>f</i></button></div>
          <svg class="chev"><use href="#chev"/></svg>
        </div>
        <p class="acts-title">Ações mais Utilizadas</p>
        <div class="acts"><button>simplificar</button><button>resolver para</button><button>inversa</button><button>tangente</button><button>linha</button></div>
        <div class="entry two"><span class="frac"><span>((2 · &nbsp;44100 · &nbsp;16) · 120)</span><span>8</span></span></div>
        <p class="examples">Exemplos »</p>
        <p class="solution">Solução</p>
        <div class="result"><button class="more"></button><p><span class="frac"><span>((2 · &nbsp;44100 · &nbsp;16) · &nbsp;120)</span><span>8</span></span> = 21168000</p></div>
      </div>
      <div class="gutter"></div>
    </div>
    <div class="screen w-248">
      <div class="slide h-202 topless">
        <svg class="back"><use href="#backdrop"/></svg>
        <div class="modal">
          <section class="quiz small">
            <header><button aria-label="Ouvir"><svg class="snd"><use href="#sound"/></svg></button><button aria-label="Fechar"><svg class="ico"><use href="#close"/></svg></button></header>
            <h2>Qual é o espaço ocupaço pelos dados (amostras)<br>de uma música de estéreo qualidade CD não<br>formatada com uma duração de 2 minutos?</h2>
            <div class="opts"><button class="opt">10584000 B</button><button class="opt">2844450 B</button><button class="opt hit">21168000 B<svg class="tick"><use href="#check"/></svg></button></div>
          </section>
          <div class="bar"><span style="width:67%"></span></div>
        </div>
        <p class="answer high"><svg><use href="#touch"/></svg>R</p>
        <p class="slide-foot"><span>8</span> INE5431 Sistemas Multimídia - Prof. Roberto Willrich</p>
      </div>
    </div>
  </section>

  <section class="pair in-10">
    <div class="panel h-163">
      <div class="sheet trimmed">
        <p class="acts-title">Ações mais Utilizadas</p>
        <div class="acts"><button>simplificar</button><button>resolver para</button><button>inversa</button><button>tangente</button><button>linha</button></div>
        <div class="entry">10 · 176 · 144 · 15</div>
        <p class="examples">Exemplos »</p>
        <p class="solution">Solução</p>
        <div class="result"><button class="more"></button><p>10 · &nbsp;176 · &nbsp;144 · &nbsp;15 = 3801600</p></div>
      </div>
      <div class="gutter thumb"></div>
    </div>
    <div class="screen w-254">
      <div class="slide h-163 peek">
        <svg class="back"><use href="#backdrop"/></svg>
        <p class="slide-title">Requisitos das Informações multimídia</p>
        <div class="modal">
          <section class="quiz small">
            <header><button aria-label="Ouvir"><svg class="snd"><use href="#sound"/></svg></button><button aria-label="Fechar"><svg class="ico"><use href="#close"/></svg></button></header>
            <h2>Qual é a taxa de bits considerando apenas os<br>dados de um vídeo não compactado com 10fps<br>de 176 × 144 com 15 bits/pixel de 10s?</h2>
            <div class="opts"><button class="opt">475200 bps</button><button class="opt hit mist">3801600 bps<svg class="tick"><use href="#check"/></svg></button><button class="opt">380160 bps</button></div>
          </section>
          <div class="bar"><span style="width:33%"></span></div>
        </div>
        <table class="formats"><tr><th>SDTV (HDMI 1.3)</th><td>704x480</td><td>48</td><td>30</td><td>486,6</td></tr></table>
      </div>
    </div>
  </section>

  <section class="pair in-12">
    <div class="panel h-168">
      <div class="sheet">
        <div class="entry two first"><span class="frac"><span>((10 · 176 · 144 · 15) · 10)</span><span>8</span></span></div>
        <p class="examples">Exemplos »</p>
        <p class="solution">Solução</p>
        <div class="result"><button class="more"></button><p><span class="frac"><span>((10 · &nbsp;176 · &nbsp;144 · &nbsp;15) · &nbsp;10)</span><span>8</span></span> = 4752000</p><h3>Passos</h3></div>
      </div>
      <div class="gutter thumb"></div>
    </div>
    <div class="screen w-254 later">
      <div class="slide h-164">
        <svg class="back"><use href="#backdrop"/></svg>
        <p class="slide-title">Requisitos das Informações multimídia</p>
        <div class="modal">
          <section class="quiz small">
            <header><button aria-label="Ouvir"><svg class="snd"><use href="#sound"/></svg></button><button aria-label="Fechar"><svg class="ico"><use href="#close"/></svg></button></header>
            <h2>Qual é o espaço ocupado pela área de dados de<br>um vídeo não compactado com 10fps de 176 ×<br>144 com 15 bits/pixel de 10s?</h2>
            <div class="opts"><button class="opt hit">4752000 B<svg class="tick"><use href="#check"/></svg></button><button class="opt">475200 B</button><button class="opt">594000 B</button></div>
          </section>
          <div class="bar"><span style="width:67%"></span></div>
        </div>
      </div>
    </div>
  </section>
</div>
</main>
</body>
</html>
```
FILE: styles.css
```css
* { box-sizing: border-box; }
body { margin: 0; background: #fff; color: #111; font-family: "Liberation Sans", Arial, sans-serif; }
h1, h2, h3, p, ul { margin: 0; padding: 0; font-weight: normal; }
ul { list-style: none; }
svg { display: block; overflow: visible; }
button { border: 0; padding: 0; margin: 0; background: none; color: inherit; font: inherit; text-align: left; cursor: pointer; }
.defs { position: absolute; width: 0; height: 0; }

/* Board: notes on the left, lesson clips on the right */
.board { display: grid; grid-template-columns: 180fr 267fr; min-height: 100vh; }
.notes, .clips { display: grid; align-items: start; align-content: start; min-width: 0; }
.notes {
  grid-template-rows:
    minmax(329px, auto) minmax(336px, auto) minmax(171px, auto) minmax(191px, auto)
    minmax(314px, auto) minmax(326px, auto) minmax(330px, auto) minmax(308px, auto)
    minmax(251px, auto) minmax(297px, auto) minmax(271px, auto) minmax(297px, auto) auto;
}
.clips {
  padding-top: 21px;
  grid-template-rows:
    minmax(318px, auto) minmax(175px, auto) minmax(149px, auto) minmax(277px, auto)
    minmax(185px, auto) minmax(194px, auto) minmax(249px, auto) minmax(267px, auto)
    minmax(264px, auto) minmax(299px, auto) minmax(431px, auto) minmax(303px, auto)
    minmax(260px, auto) minmax(228px, auto) minmax(205px, auto) auto;
}
.at-12 { margin-left: 12px; }
.at-13 { margin-left: 13px; }
.at-20 { margin-left: 21px; }
.at-23 { margin-left: 23px; }
.at-29 { margin-left: 29px; }
.at-37 { margin-left: 37px; }
.in-1 { margin-left: 1px; }
.in-5 { margin-left: 5px; }
.in-10 { margin-left: 10px; }
.in-12 { margin-left: 12px; }
.in-16 { margin-left: 16px; }
.in-18 { margin-left: 18px; }
.in-27 { margin-left: 27px; }
.in-92 { margin-left: 92px; }
.in-96 { margin-left: 96px; }

/* Quiz */
.quiz { width: 347px; white-space: nowrap; }
.quiz header { display: flex; justify-content: flex-end; align-items: center; gap: 6px; height: 32px; padding-bottom: 4px; }
.quiz .ico { width: 12px; height: 12px; }
.quiz .snd { width: 14px; height: 12px; }
.quiz h2 { font-size: 15px; line-height: 19px; padding: 13px 0 13px 1px; }
.opts { display: flex; flex-direction: column; gap: 8px; }
.opt { position: relative; margin: 0 9px; padding: 5px 16px; border-radius: 3px; background: #ddd; font-size: 13px; line-height: 18px; }
.opt.hit { margin: 0; padding: 4px 15px; border: 1px solid #111; background: #a4d9c3; color: #255c41; line-height: 19px; }
.opt.mist { background: #b0dacf; }
.opt.sky { background: #bbdcdf; }
.opt.blue { background: #c3dce7; }
.opt .tick { position: absolute; top: 7px; right: 7px; width: 17px; height: 13px; }
.opt.cropped { height: 78px; overflow: hidden; border-radius: 3px 3px 0 0; }

/* Multiple-answer quiz with score */
.multi { width: 322px; }
.multi header { margin: 0 -12px; padding-right: 12px; border-bottom: 1px solid #eee; }
.multi h2 { line-height: 15px; padding: 15px 0 15px 2px; }
.multi .opts { gap: 6px; }
.multi .opt { margin: 0; padding: 4px 0 5px 29px; border-radius: 4px; line-height: 20px; border-bottom: 1px solid #aaa; }
.multi .opt.hit { padding: 4px 0 5px 29px; border: 0; background: #b7e5cf; line-height: 20px; }
.multi .opt .tick { top: 9px; left: 10px; right: auto; width: 12px; height: 9px; }
.plus { display: inline-block; margin: -2px 0 -2px 7px; padding: 0 3px; border: 1px solid #1d5a3c; border-radius: 3px; outline: 1px solid #fff; background: #fff; color: #1d5a3c; font: 900 11px/12px Inter, "Liberation Sans", sans-serif; vertical-align: 1px; }
.multi footer { display: flex; justify-content: space-between; margin-top: 13px; }
.score { display: flex; align-items: center; width: 172px; height: 30px; padding-left: 8px; border: 1px solid #eee; border-radius: 15px; }
.score .track { width: 88px; height: 12px; border-radius: 6px 0 0 6px; background: #ddd; overflow: hidden; }
.score .track span { display: block; height: 100%; background: linear-gradient(90deg, #52ca8e, #49b07a); }
.score .star { width: 26px; height: 24px; }
.score b { margin-left: 7px; font-size: 17px; color: #333; }
.score i { margin: 0 3px; color: #999; font-weight: normal; }
.play { width: 30px; height: 30px; }

.mini { width: 203px; }
.mini header { height: 22px; padding-bottom: 2px; margin: 0 -7px; padding-right: 3px; }
.mini .ico { width: 8px; height: 8px; }
.mini h2 { font-size: 10px; line-height: 12px; padding: 7px 0 8px 1px; }
.mini .opts { gap: 4px; }
.mini .opt, .mini .opt.hit { padding: 3px 0 3px 19px; font-size: 9px; line-height: 13px; }
.mini .opt .tick { top: 6px; left: 7px; width: 8px; height: 6px; }
.mini .plus { margin: -1px 0 -1px 5px; padding: 0 2px; font-size: 7px; line-height: 7px; vertical-align: 1px; }
.mini footer { margin-top: 8px; }
.mini .score { width: 112px; height: 20px; padding-left: 5px; }
.mini .track { width: 57px; height: 7px; border-radius: 0; }
.mini .star { width: 16px; height: 14px; }
.mini .score b { margin-left: 4px; font-size: 10px; }
.mini .score i { margin: 0 2px; }
.mini .play { width: 20px; height: 20px; }
.framed { width: 221px; height: 214px; margin-left: 60px; padding-left: 7px; background: linear-gradient(#ddd, #ddd) right bottom / 3px 191px no-repeat; }

/* Compact quiz */
.small { width: 224px; }
.small header { height: 21px; margin: 0 -7px; padding: 0 7px 1px; gap: 3px; border-bottom: 1px solid #eee; }
.small .ico { width: 8px; height: 8px; }
.small .snd { width: 10px; height: 8px; }
.small h2 { font-size: 10px; line-height: 12px; padding: 9px 0 9px 1px; }
.small .opts { gap: 5px; }
.small .opt { margin: 0 6px; padding: 3px 10px; border-radius: 2px; font-size: 8px; line-height: 12px; }
.small .opt.hit { margin: -1px 0; padding: 3px 10px; font-size: 9px; border-radius: 3px; }
.small .opt .tick { top: 4px; right: 4px; width: 11px; height: 9px; }
.small .wide .opt:not(.hit) { margin: 0 2px; }
.small .tight .opt:not(.hit) { line-height: 11px; padding: 4px 10px 3px; }
.flat header { border-color: transparent; }
.small.flat .opt.hit { border-color: transparent; }

/* Big quiz */
.large { width: 465px; }
.large header { gap: 8px; padding: 0; }
.large .ico { width: 15px; height: 15px; }
.large .snd { width: 18px; height: 15px; }
.large h2 { font-size: 20px; line-height: 24px; padding: 25px 0 18px 1px; }
.large .opts { gap: 9px; }
.large .opt { margin: 0 12px; padding: 9px 21px; font-size: 17px; line-height: 20px; border-radius: 4px; }
.large .opt.hit { margin: 0; padding: 9px 22px; font-size: 18px; line-height: 20px; }
.large .opt .tick { top: 11px; right: 9px; width: 23px; height: 17px; }

.duo { display: flex; align-items: flex-start; }
.duo-params { padding-left: 42px; gap: 115px; }
.duo-params > :last-child { margin-top: 20px; }
.duo-retina { padding-left: 48px; gap: 109px; }
.duo-retina > :last-child { margin-top: 10px; }
.duo-colors { padding-left: 51px; gap: 107px; }
.duo-colors > :last-child { margin-top: 15px; }
.duo-bits { padding-left: 55px; gap: 100px; }
.duo-bits > :last-child { margin-top: 9px; }
.duo-palette { padding-left: 58px; gap: 97px; }
.duo-palette > :first-child { margin-top: 4px; }

/* Audio lesson: spectrum window and player */
.lesson { display: flex; height: 291px; overflow: hidden; }
.audacity { flex: none; width: 255px; background: #f0f0f0; border-right: 1px solid #777; font-family: Lato, "Noto Sans", sans-serif; font-size: 7px; line-height: 12px; color: #000; white-space: nowrap; }
.titlebar { display: flex; height: 15px; padding: 0 6px 0 3px; background: #fff; gap: 14px; }
.titlebar span:first-child { flex: 1; }
.wbtn { width: 9px; font-size: 7px; text-align: center; }
.plotrow { display: flex; height: 178px; padding-top: 2px; }
.db { width: 22px; padding-left: 2px; }
.db li { height: 14px; line-height: 14px; }
.db li:first-child { height: 17px; line-height: 10px; }
.db li:last-child { height: 10px; line-height: 10px; }
.plot { width: 206px; height: 176px; }
.vscroll { width: 8px; margin: 9px 1px; background: #cdcdcd; }
.zoomer { display: flex; flex-direction: column; align-items: center; justify-content: space-between; width: 15px; }
.zoomer svg { width: 9px; height: 8px; }
.zoomer span { width: 10px; flex: 1; margin: 8px 0; background: linear-gradient(#0a74d6, #0a74d6) center bottom / 10px 5px no-repeat, linear-gradient(#ddd, #ddd) center / 2px 100% no-repeat; }
.hz { display: grid; grid-template-columns: 19px 22px 23px 29px 36px 28px 26px 1fr; padding: 1px 0 0 23px; height: 17px; font-size: 6px; }
.readout { display: flex; align-items: center; height: 12px; padding-left: 21px; }
.readout input:not([type]) { width: 70px; height: 12px; margin: 0 1px; padding: 0 1px; border: 1px solid #777; background: #f0f0f0; font: inherit; font-size: 6px; color: inherit; }
.readout [type=checkbox] { appearance: none; flex: none; width: 7px; height: 7px; margin: 0 2px; border: 1px solid #222; background: #fff; }
.readout [type=checkbox]:checked { background: linear-gradient(135deg, #fff 40%, #222 40% 60%, #fff 60%); }
.settings { display: grid; grid-template-columns: 30px 89px 13px 62px 39px; column-gap: 3px; row-gap: 2px; padding: 4px 0 0 3px; }
.settings select { appearance: none; height: 11px; padding: 0 2px; border: 1px solid #aaa; border-radius: 0; background: #e3e3e3 url("data:image/svg+xml,%3Csvg xmlns='http://www.w3.org/2000/svg' viewBox='0 0 6 4'%3E%3Cpath d='M1 1l2 2 2-2' fill='none' stroke='%23555' stroke-width='.7'/%3E%3C/svg%3E") right 2px center / 6px 4px no-repeat; font: inherit; line-height: 9px; color: inherit; }
.settings button, .closing button { height: 11px; border: 1px solid #aaa; background: #e1e1e1; text-align: center; line-height: 9px; }
.closing { display: flex; justify-content: flex-end; align-items: center; gap: 5px; padding: 3px 6px 8px 0; border-bottom: 1px solid #d5d5d5; }
.closing button { width: 39px; }
.closing .help { width: 15px; height: 14px; display: grid; place-items: center; }
.help svg { width: 12px; height: 12px; }

.screen { flex: none; overflow: hidden; }
.w-242 { width: 242px; }
.w-248 { width: 248px; }
.w-254 { width: 254px; }
.w-260 { width: 260px; }
.w-267 { width: 267px; }
.screen h1 { font: 600 16px/16px "Open Sans", "Noto Sans", sans-serif; color: #333; white-space: nowrap; }
.screen.w-242 h1, .screen.w-248 h1 { height: 54px; line-height: 14px; }
.desktop { height: 237px; background: linear-gradient(#8b8b8b 0 40px, #707070 60px 120px, #4b4b5c 130px 190px, #6b6b6b 195px 208px, #272c33 208px); }
.desktop small { display: block; height: 12px; padding: 2px 0 0 3px; font-size: 5px; color: #333; }
.modal { position: relative; width: 240px; background: #fff; overflow: hidden; }
.modal .quiz { margin-left: 8px; padding-bottom: 11px; }
.desktop .modal { margin-left: 3px; }
.tall .quiz { min-height: 188px; }
.bar { height: 3px; background: #666; }
.bar span { display: block; height: 3px; background: #0a94f7; }
.taskbar { display: flex; align-items: center; justify-content: space-between; height: 19px; padding: 4px 2px 0 4px; color: #999; font-size: 4px; line-height: 5px; }
.taskbar i { width: 6px; height: 6px; border-radius: 3px; background: #7b6a40; }
.taskbar i:nth-child(4n+1) { background: #4f6d86; border-radius: 1px; }
.taskbar i:nth-child(4n+2) { background: #8a8a8a; }
.taskbar i:nth-child(4n) { background: #3a8a63; }
.taskbar i:nth-child(7) { background: #8c3560; }
.controls { display: flex; align-items: center; gap: 3px; height: 16px; background: #272727; color: #999; font-size: 8px; white-space: nowrap; }
.controls svg { width: 10px; height: 10px; flex: none; }
.controls .seek { flex: 0 1 78px; height: 2px; background: #aaa; }
.controls b { margin-left: 6px; font-weight: bold; color: #aaa; }
.controls .dim { color: #555; }
.controls .late { margin-left: 30px; }
.controls .gear { margin: 0 10px; color: #444; font-size: 11px; }
.controls.deck { position: absolute; left: 0; right: 0; bottom: 0; height: 21px; padding-left: 9px; }
.deck .seek { flex: 0 0 148px; margin-left: 8px; }
.deck .seek + svg + .seek { flex: 0 0 38px; margin-left: 0; }
.deck .seek.short { flex-basis: 28px; }
.deck .seek.short + svg + .dark { flex: 0 0 145px; background: #555; }

/* Calculator + player pair */
.pair { display: flex; gap: 12px; align-items: flex-start; }
.panel { display: flex; flex: none; width: 317px; overflow: hidden; border-right: 1px solid #777; font-family: Lato, "Open Sans", sans-serif; font-size: 8px; color: #444; white-space: nowrap; }
.h-163 { height: 163px; }
.h-164 { height: 164px; }
.h-168 { height: 168px; }
.h-194 { height: 194px; }
.h-202 { height: 202px; }
.h-218 { height: 218px; }
.h-219 { height: 219px; }
.h-288 { height: 288px; }
.h-350 { height: 350px; }
.sheet { flex: none; width: 305px; padding-left: 6px; overflow: hidden; background: #f5f3f5; }
.gutter { flex: none; width: 8px; background: #f1f1f1; }
.gutter.thumb { background: linear-gradient(#c1c1c1, #c1c1c1) top / 100% 16px no-repeat #f1f1f1; }
.gutter.thumb-long { background: linear-gradient(#c1c1c1, #c1c1c1) top / 100% 72px no-repeat #f1f1f1; }
.full { height: 14px; padding-left: 2px; font-style: italic; line-height: 15px; }
.keypad { position: relative; display: flex; flex-direction: column; justify-content: flex-end; gap: 2px; width: 330px; height: 27px; padding: 0 0 5px 5px; border: solid #ccc; border-width: 0 0 1px 1px; border-radius: 0 0 0 4px; background: #fff; }
.keypad.whole { height: 55px; border-width: 1px; border-radius: 4px; }
.keypad.short { height: 23px; }
.keypad.sliver { height: 11px; }
.keys { display: flex; gap: 3px; height: 19px; flex: none; }
.keys button { flex: none; width: 28px; height: 19px; border: 1px solid #eee; background: #fafafa; font: 10px/15px "Liberation Serif", "DejaVu Serif", serif; text-align: center; overflow: hidden; }
.keys sup, .keys sub { font-size: 6px; line-height: 0; }
.keys .frac { font-size: 8px; line-height: 8px; }
.chev { position: absolute; left: 184px; bottom: -6px; width: 12px; height: 12px; }
.acts-title { height: 17px; line-height: 20px; }
.acts { display: flex; gap: 5px; height: 19px; }
.acts button { flex: none; width: 60px; border: 1px solid #e5e5e5; background: #fafafa; text-align: center; }
.entry { display: flex; align-items: center; width: 330px; height: 22px; margin-top: 13px; padding-left: 8px; border: 1px solid #ccc; border-radius: 4px; background: #fff; font: 12px/12px "Liberation Serif", serif; }
.entry.two { height: 35px; font-size: 11px; }
.entry.three { height: 45px; margin-top: 11px; font-size: 10px; line-height: 10px; }
.entry.first { margin-top: 7px; }
.entry.lower { height: 16px; margin-top: 0; border-top: 0; border-radius: 0 0 4px 4px; padding-bottom: 6px; }
.frac { display: inline-flex; flex-direction: column; align-items: center; vertical-align: middle; line-height: 11px; }
.frac > :first-child { border-bottom: 1px solid #555; padding: 0 1px; }
.paren { display: flex; align-items: center; }
.paren::before, .paren::after { content: "("; font-size: 22px; line-height: 20px; }
.paren::after { content: ")"; }
.examples { height: 37px; margin-left: 1px; border-bottom: 1px solid #ddd; line-height: 43px; }
.solution { height: 25px; margin-left: 1px; line-height: 25px; font-size: 9px; color: #2b5560; }
.result { position: relative; width: 330px; height: 200px; margin-left: 1px; padding: 20px 0 0 6px; border: 1px solid #ccc; border-radius: 4px; background: #fff; font: 9px/18px "Liberation Serif", serif; color: #1c4450; }
.result .frac { font-size: 8px; line-height: 9px; }
.result .frac .frac { line-height: 8px; }
.result h3 { font: 11px/20px Lato, sans-serif; }
.result hr { margin: 6px 0; border: 0; border-top: 1px solid #999; }
.more { position: absolute; top: 5px; left: 288px; width: 30px; height: 16px; padding-left: 6px; border: 1px solid #aaa; border-radius: 3px; font: 8px/14px Lato, sans-serif; }
.trimmed .acts-title { height: 13px; line-height: 12px; }

.stack { flex-direction: column; }
.split { display: flex; flex: none; height: 138px; overflow: hidden; }
.split.upper { height: 170px; }
.tabs { display: flex; align-items: center; flex: none; gap: 8px; height: 22px; border-top: 1px solid #777; background: #dfe2e6; font-size: 8px; padding-right: 10px; }
.tab { align-self: flex-end; width: 22px; height: 17px; border-radius: 0 4px 0 0; background: #fff; line-height: 17px; font-size: 7px; }
.win { margin-left: auto; }
.tabs .win ~ span { margin-left: 8px; }
.address { display: flex; align-items: center; flex: none; gap: 8px; height: 20px; background: #fff; }
.address input { width: 186px; padding: 0; border: 0; background: #f1f3f4; height: 14px; font: inherit; color: inherit; }
.address b { width: 12px; height: 12px; border-radius: 6px; background: #4b8a2c; color: #fff; text-align: center; line-height: 12px; font-weight: normal; }
.methods { display: flex; gap: 18px; height: 23px; line-height: 25px; margin-left: 1px; }
.methods a { color: #2c8286; text-decoration: none; }

/* Slides behind a quiz */
.screen h1.halved { height: 7px; margin-top: -1px; line-height: 1px; overflow: hidden; }
.lead { height: 38px; padding-left: 6px; font: 8px/38px "Open Sans", "Noto Sans", sans-serif; color: #333; white-space: nowrap; }
.crumb { height: 11px; padding-left: 9px; overflow: hidden; background: #f3f3f3; font: 8px/1px "Open Sans", sans-serif; white-space: nowrap; }
.crumb a { color: #1275a8; text-decoration: none; }
.screen h1.title { height: 44px; line-height: 50px; }
.title + .lead { height: 28px; line-height: 20px; }
.slide { position: relative; overflow: hidden; background: #17181c; color: #999; font-family: "Liberation Serif", serif; }
.slide:has(.deck) { height: 242px; }
.slide .quiz { font-family: "Liberation Sans", Arial, sans-serif; color: #111; }
.back { position: absolute; inset: 0; width: 100%; height: 100%; }
.slide-title { position: relative; height: 12px; padding-left: 28px; font-size: 18px; line-height: 28px; color: #857f1c; white-space: nowrap; }
.slide .modal { margin-left: 12px; }
.raised .slide-title { height: 9px; line-height: 25px; }
.peek .slide-title { height: 2px; line-height: 14px; }
.topless .modal { margin-top: -3px; }
.topless .quiz { padding-bottom: 21px; }
.slide-foot { position: absolute; left: 10px; bottom: 2px; font-size: 5px; line-height: 6px; white-space: nowrap; }
.slide-foot span { margin-right: 10px; }
.slide:has(.deck) .slide-foot { bottom: 25px; }
.answer { position: absolute; right: 0; bottom: 9px; display: flex; align-items: center; gap: 5px; font: 7px/17px "Liberation Sans", sans-serif; }
.answer.high { bottom: 26px; }
.answer svg { width: 17px; height: 17px; }
.figure { position: absolute; left: 152px; top: 164px; width: 56px; font-size: 7px; line-height: 22px; text-align: center; }
.figure span { display: block; height: 14px; background: linear-gradient(90deg, #2e3440, #5a5030, #3a3328); border-right: 1px solid #999; }
.side { position: absolute; right: 0; top: 70px; font-size: 7px; line-height: 13px; }
.side.low { top: 198px; line-height: 9px; }
.reuse { height: 15px; padding-left: 10px; border: solid #eee; border-width: 0 0 1px 1px; background: #fafafa; font-size: 7px; line-height: 14px; color: #888; }
.formats { position: relative; margin-left: 40px; border-collapse: collapse; font-size: 6px; line-height: 8px; }
.formats th, .formats td { padding: 0 16px 0 2px; border: 1px solid #6e5a22; text-align: left; }
.formats th { padding-right: 4px; }
.screen.later { margin-top: 4px; }
```
